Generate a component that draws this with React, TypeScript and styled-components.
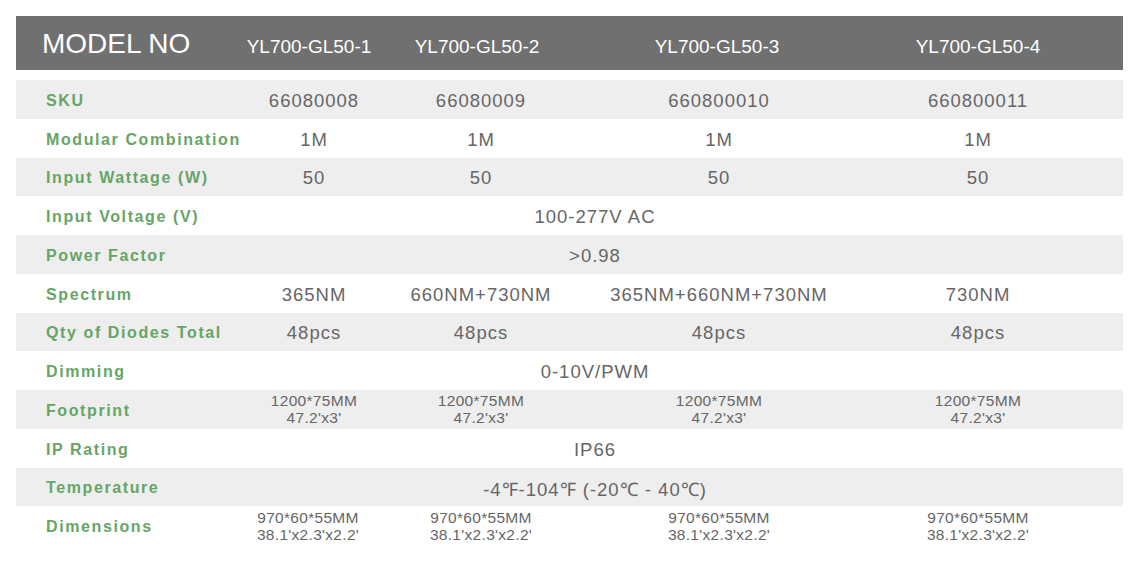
import React from "react";
import styled, { createGlobalStyle } from "styled-components";

const GlobalStyle = createGlobalStyle`
  html, body { margin: 0; padding: 0; background: #ffffff; }
  body { font-family: "Liberation Sans", Arial, sans-serif; }
`;

const Page = styled.div`
  padding: 16px 17px 0 16px;
  width: 1107px;
`;

const HeaderBar = styled.div`
  display: grid;
  grid-template-columns: 249px 88px 248px 232px 290px;
  height: 54px;
  background: #707070;
  color: #ffffff;
  align-items: center;
  margin-bottom: 10px;
`;

const HeaderTitle = styled.div`
  font-size: 28px;
  padding-left: 26px;
  padding-top: 2px;
  white-space: nowrap;
`;

const HeaderCell = styled.div`
  font-size: 19px;
  display: flex;
  justify-content: center;
  white-space: nowrap;
  padding-top: 7px;
`;

const Body = styled.div`
  display: flex;
  flex-direction: column;
`;

const Row = styled.div<{ $shade: boolean }>`
  display: grid;
  grid-template-columns: 255px 86px 248px 228px 290px;
  height: 38.75px;
  background: ${(p) => (p.$shade ? "#eeeeee" : "#ffffff")};
`;

const Label = styled.div`
  display: flex;
  align-items: center;
  padding-left: 30px;
  font-weight: bold;
  font-size: 16px;
  letter-spacing: 1.6px;
  color: #66a566;
  white-space: nowrap;
  padding-top: 3px;
`;

const Value = styled.div<{ $small?: boolean; $shift?: number }>`
  display: flex;
  flex-direction: column;
  align-items: center;
  justify-content: center;
  color: #666666;
  font-size: ${(p) => (p.$small ? "15.5px" : "18.5px")};
  letter-spacing: ${(p) => (p.$small ? "0.3px" : "1px")};
  line-height: ${(p) => (p.$small ? "17px" : "normal")};
  white-space: nowrap;
  text-align: center;
  padding-top: ${(p) => (p.$small ? "0" : "3px")};
  padding-right: ${(p) => (p.$shift ? `${p.$shift}px` : "0")};
`;

const SpanValue = styled(Value)`
  grid-column: 2 / 6;
  padding-right: 204px;
`;

type RowData = { label: string; values: (string | string[])[]; small?: boolean; shift?: number };

const rows: RowData[] = [
  { label: "SKU", values: ["66080008", "66080009", "660800010", "660800011"] },
  { label: "Modular Combination", values: ["1M", "1M", "1M", "1M"] },
  { label: "Input Wattage (W)", values: ["50", "50", "50", "50"] },
  { label: "Input Voltage (V)", values: ["100-277V AC"] },
  { label: "Power Factor", values: [">0.98"] },
  { label: "Spectrum", values: ["365NM", "660NM+730NM", "365NM+660NM+730NM", "730NM"] },
  { label: "Qty of Diodes Total", values: ["48pcs", "48pcs", "48pcs", "48pcs"] },
  { label: "Dimming", values: ["0-10V/PWM"] },
  {
    label: "Footprint",
    small: true,
    values: [
      ["1200*75MM", "47.2'x3'"],
      ["1200*75MM", "47.2'x3'"],
      ["1200*75MM", "47.2'x3'"],
      ["1200*75MM", "47.2'x3'"],
    ],
  },
  { label: "IP Rating", values: ["IP66"] },
  { label: "Temperature", values: ["-4℉-104℉ (-20℃ - 40℃)"] },
  {
    label: "Dimensions",
    small: true,
    shift: 12,
    values: [
      ["970*60*55MM", "38.1'x2.3'x2.2'"],
      ["970*60*55MM", "38.1'x2.3'x2.2'"],
      ["970*60*55MM", "38.1'x2.3'x2.2'"],
      ["970*60*55MM", "38.1'x2.3'x2.2'"],
    ],
  },
];

const renderContent = (v: string | string[]) =>
  Array.isArray(v) ? v.map((line, i) => <span key={i}>{line}</span>) : v;

export default function App() {
  return (
    <>
      <GlobalStyle />
      <Page>
        <HeaderBar>
          <HeaderTitle>MODEL NO</HeaderTitle>
          <HeaderCell>YL700-GL50-1</HeaderCell>
          <HeaderCell>YL700-GL50-2</HeaderCell>
          <HeaderCell>YL700-GL50-3</HeaderCell>
          <HeaderCell>YL700-GL50-4</HeaderCell>
        </HeaderBar>
        <Body>
          {rows.map((r, i) => (
            <Row key={r.label} $shade={i % 2 === 0}>
              <Label>{r.label}</Label>
              {r.values.length === 1 ? (
                <SpanValue>{renderContent(r.values[0])}</SpanValue>
              ) : (
                r.values.map((v, j) => (
                  <Value key={j} $small={r.small} $shift={j === 0 ? r.shift : undefined}>
                    {renderContent(v)}
                  </Value>
                ))
              )}
            </Row>
          ))}
        </Body>
      </Page>
    </>
  );
}
